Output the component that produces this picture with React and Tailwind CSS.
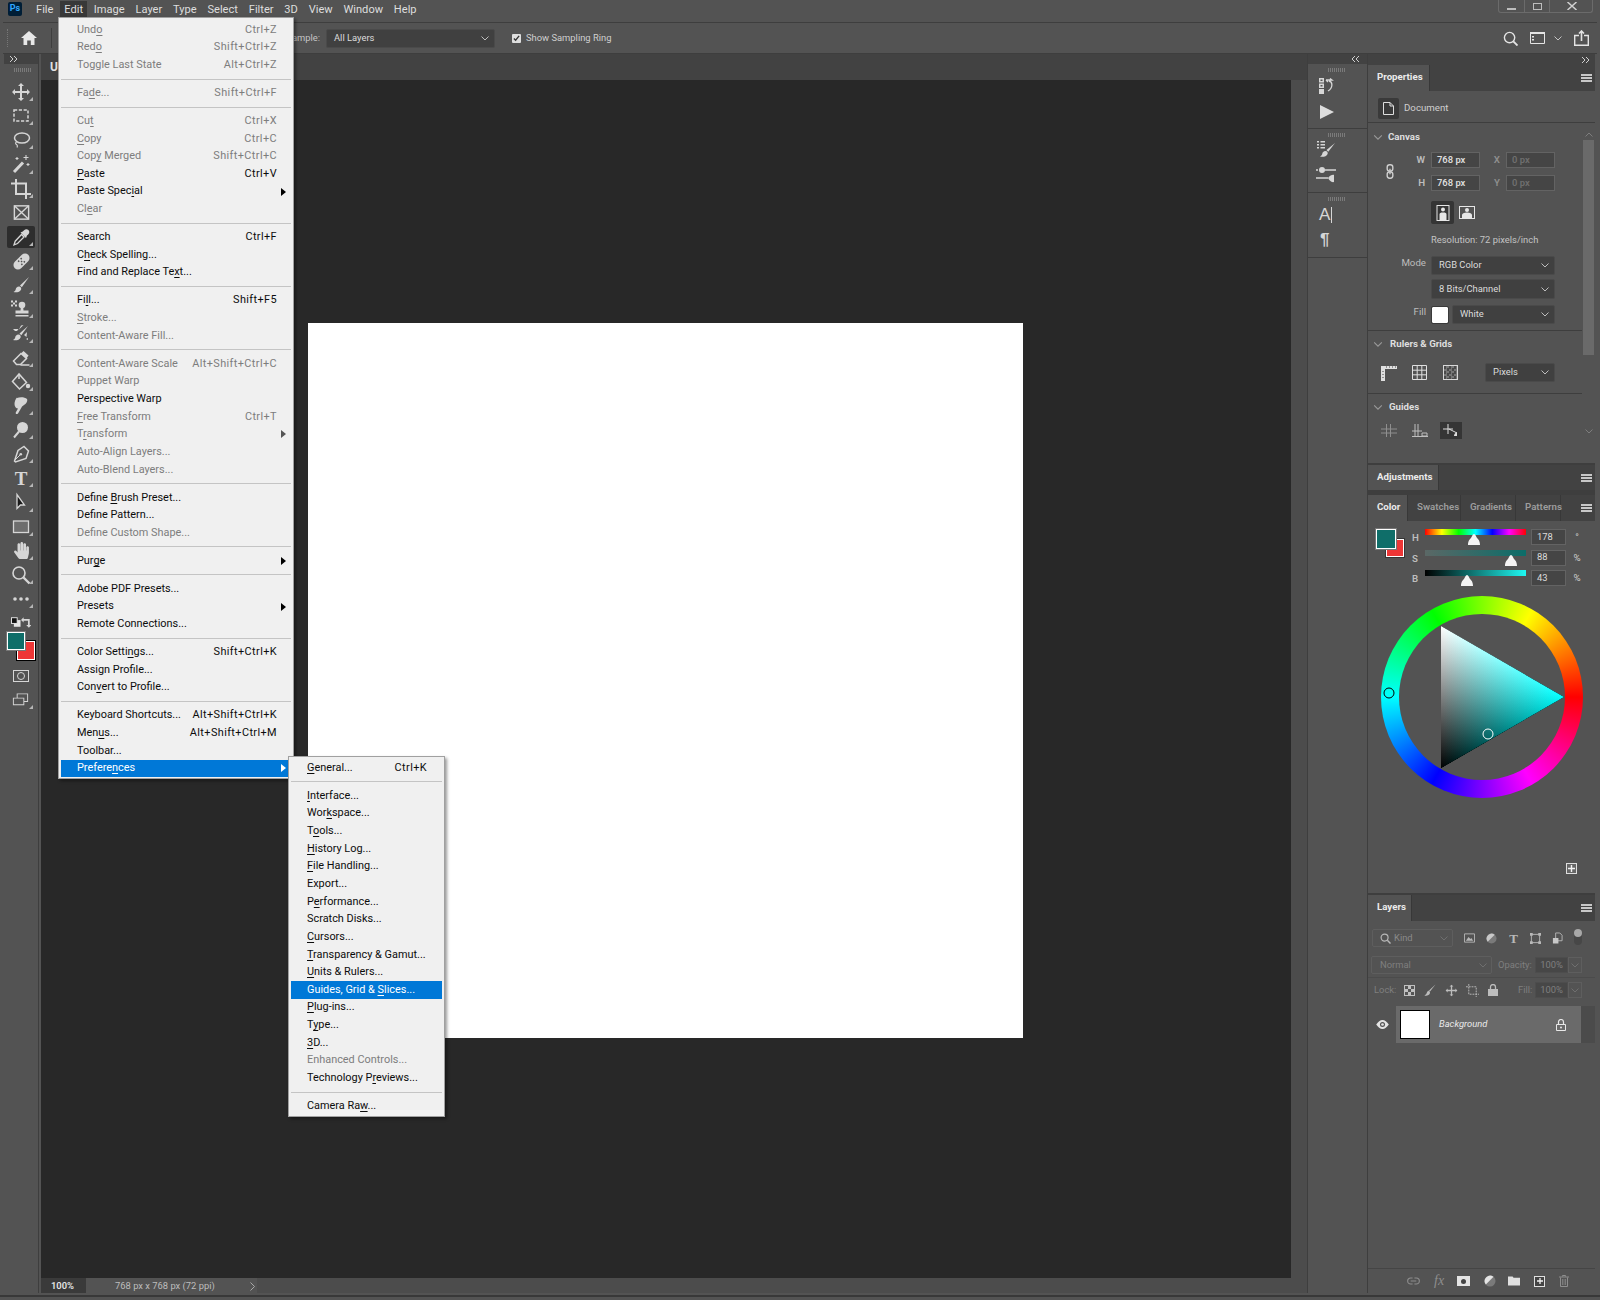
import { FaHandPaper } from 'react-icons/fa';

// &x marks the mnemonic letter, third value means greyed out
const editMenu = [
  ['Und&o', 'Ctrl+Z', 1], ['Red&o', 'Shift+Ctrl+Z', 1], ['Toggle Last State', 'Alt+Ctrl+Z', 1], '-',
  ['Fa&de...', 'Shift+Ctrl+F', 1], '-',
  ['Cu&t', 'Ctrl+X', 1], ['&Copy', 'Ctrl+C', 1], ['Cop&y Merged', 'Shift+Ctrl+C', 1], ['&Paste', 'Ctrl+V'], ['Paste Spec&ial', '>'], ['Cl&ear', '', 1], '-',
  ['Search', 'Ctrl+F'], ['C&heck Spelling...', ''], ['Find and Replace Te&xt...', ''], '-',
  ['Fi&ll...', 'Shift+F5'], ['&Stroke...', '', 1], ['Content-Aware Fill...', '', 1], '-',
  ['Content-Aware Scale', 'Alt+Shift+Ctrl+C', 1], ['Puppet Warp', '', 1], ['Perspective Warp', ''], ['&Free Transform', 'Ctrl+T', 1], ['T&ransform', '>', 1], ['Auto-Align Layers...', '', 1], ['Auto-Blend Layers...', '', 1], '-',
  ['Define &Brush Preset...', ''], ['Define Pattern...', ''], ['Define Custom Shape...', '', 1], '-',
  ['Pur&ge', '>'], '-',
  ['Adobe PDF Presets...', ''], ['Presets', '>'], ['Remote Connections...', ''], '-',
  ['Color Setti&ngs...', 'Shift+Ctrl+K'], ['Assign Profile...', ''], ['Con&vert to Profile...', ''], '-',
  ['Keyboard Shortcuts...', 'Alt+Shift+Ctrl+K'], ['Men&us...', 'Alt+Shift+Ctrl+M'], ['Toolbar...', ''], ['Prefere&nces', '>', 0, 1],
];

const prefsMenu = [
  ['&General...', 'Ctrl+K'], '-',
  ['&Interface...', ''], ['Wor&kspace...', ''], ['T&ools...', ''], ['&History Log...', ''], ['&File Handling...', ''], ['Export...', ''], ['P&erformance...', ''], ['Scratch Disks...', ''], ['&Cursors...', ''], ['&Transparency & Gamut...', ''], ['&Units & Rulers...', ''], ['Guides, Grid & &Slices...', '', 0, 1], ['&Plug-ins...', ''], ['T&ype...', ''], ['&3D...', ''], ['Enhanced Controls...', '', 1], ['Technology P&reviews...', ''], '-',
  ['Camera Ra&w...', ''],
];

function Label({ text }) {
  const i = text.search(/&[^ ]/);
  if (i < 0) return <span>{text}</span>;
  return (
    <span>
      {text.slice(0, i)}
      <span className="underline underline-offset-2">{text[i + 1]}</span>
      {text.slice(i + 2)}
    </span>
  );
}

function MenuList({ items, right }) {
  return items.map((item, i) => {
    if (item === '-') {
      return (
        <div key={i} className="h-[10.3px] flex items-center mx-[2px]">
          <div className="h-px w-full bg-[#c4c4c4]" />
        </div>
      );
    }
    const [label, shortcut, disabled, active] = item;
    return (
      <div
        key={i}
        className={`h-[17.67px] mx-[2px] pl-[16px] flex items-center justify-between whitespace-nowrap ${right} ${active ? 'bg-[#0078d7] text-white' : disabled ? 'text-[#7d7d7d]' : 'text-[#0c0c0c]'}`}
      >
        <Label text={label} />
        {shortcut === '>' ? (
          <svg viewBox="0 0 5 8" className="w-[5px] h-[8px] -mr-[9px]">
            <path d="M0 0l5 4-5 4z" fill={active ? '#fff' : disabled ? '#555' : '#000'} />
          </svg>
        ) : (
          <span className="tracking-[0.4px]">{shortcut}</span>
        )}
      </div>
    );
  });
}

const Svg = ({ s = 20, className = '', children }) => (
  <svg viewBox="0 0 20 20" width={s} height={s} className={className} fill="currentColor">
    {children}
  </svg>
);

const ln = { fill: 'none', stroke: 'currentColor', strokeWidth: 1.5 };

const BrushShape = () => (
  <>
    <path d="M18 2 9 10.5l1.8 1.8z" />
    <path d="M8 11.5c-2 0-3 1.4-3.3 3-.2 1-1.2 2-2.2 2.6 3 .6 6.6 0 7.6-2.6.5-1.400-.4-3-2.100-3z" />
  </>
);

const tools = [
  // move
  <Svg><path d="M10 1l3 3h-2v5h5V7l3 3-3 3v-2h-5v5h2l-3 3-3-3h2v-5H4v2l-3-3 3-3v2h5V4H7z" /></Svg>,
  // marquee
  <Svg><rect x="3" y="4" width="14" height="11" {...ln} strokeDasharray="3.2 1.6" /></Svg>,
  // lasso
  <Svg><ellipse cx="11" cy="8" rx="7.500" ry="5" {...ln} /><path d="M6 11.500c-2 1-1.500 2.500-.5 3 1 .5 1 2 .5 3" {...ln} strokeWidth="1.200" /></Svg>,
  // wand
  <Svg><path d="M3 18 12 8.500" {...ln} strokeWidth="3" /><path d="M15 1v5M12.500 3.500h5M6 3v3M4.500 4.500h3M17 9v3M15.500 10.500h3" {...ln} strokeWidth="1.100" /></Svg>,
  // crop
  <Svg><path d="M5 0v15h15M0 4.500h15V20" {...ln} strokeWidth="2" /></Svg>,
  // frame
  <Svg s={19}><rect x="2.500" y="3" width="15" height="14" {...ln} /><path d="M2.500 3l15 14M17.500 3l-15 14" {...ln} /></Svg>,
  // eyedropper
  <Svg><path d="M10.500 7.500l2.500 2.500-6.500 6.500-3.500 1.300 1.200-3.600z" {...ln} strokeWidth="1.300" /><path d="M9.500 5.500l5.500 5.500 1-2.500 1.200-1c1.600-1.500 1.300-3.500.2-4.500s-3-1.200-4.300.3L11.800 4.500z" /></Svg>,
  // healing
  <Svg><g transform="rotate(-45 10.500 10.500)"><rect x="1" y="6" width="19" height="9" rx="4.500" /><path d="M8 7.500h1.500v1.500H8zm3.500 0H13v1.500h-1.500zM8 12h1.500v1.500H8zm3.500 0H13v1.500h-1.500zM9.800 9.800h1.500v1.500H9.800z" fill="#535353" /></g></Svg>,
  // brush
  <Svg><BrushShape /></Svg>,
  // stamp
  <Svg><circle cx="11" cy="6" r="3.300" /><path d="M9.800 8h2.400l.3 3.500h5v3H4.500v-3h5zM4.500 16h13v1.500h-13z" /><path d="M0 1.500h2v2H0zm4 0h2v2H4zM2 3.500h2v2H2zM0 5.500h2v2H0zm4 0h2v2H4z" /></Svg>,
  // history brush
  <Svg><path d="M17 3 8.500 10.500l1.800 1.800z" /><path d="M7.500 11.500c-2 0-3 1.400-3.300 3-.2 1-1.200 2-2.200 2.600 3 .6 6.600 0 7.600-2.600.5-1.400-.4-3-2.100-3z" /><path d="M2 6h5.500L6 8H4zm8-3.500L12.500 2 8 6.500zM13 12l3-3-.5 5zM15 16l2-1v2z" /></Svg>,
  // eraser
  <Svg><path d="M2.500 13 10 5.500l5.500 5-6 6H5.500z" {...ln} /><path d="M10 5.500l2.500-2.500 5 4.500-2 3z" /><path d="M9.500 17h9" {...ln} /></Svg>,
  // bucket
  <Svg><path d="M8 2 1.500 9.500 8.500 17l7-6.500z" {...ln} /><path d="M8 7V2" {...ln} /><circle cx="17" cy="14" r="2.200" /></Svg>,
  // smudge
  <Svg><path d="M6 2c3-1.500 8-1 10 1 1 2-1 5-3 6-1.500 1-2 1.500-2.500 2.500L7 17.500c-1.500 1.500-3 0-2-1.500l2-3.500c-2 0-3.500-2-3.500-4.500 0-2.500 1-5 2.500-6.500z" /></Svg>,
  // dodge
  <Svg><circle cx="11.500" cy="7.500" r="5.500" /><path d="M3 17.500 8 11.500" {...ln} strokeWidth="2" /></Svg>,
  // pen
  <Svg><path d="M13 2.500l4.500 4.500-2.500 7.500-10.500 3.500-1-1 3.500-10.500z" {...ln} /><path d="M3.500 16.500 9 11" {...ln} strokeWidth="1" /><circle cx="9.800" cy="10.200" r="1.300" /></Svg>,
  // type
  <span className="text-[19px] leading-none font-bold font-['Liberation_Serif',serif]">T</span>,
  // path select
  <Svg><path d="M6 2.500v14l3.500-3.500 4 0z" fill="#1a1a1a" stroke="currentColor" strokeWidth="1.300" /></Svg>,
  // rectangle
  <Svg><rect x="2.500" y="4" width="15" height="11.500" fill="#6e6e6e" stroke="currentColor" strokeWidth="1.300" /></Svg>,
  // hand
  <FaHandPaper size={17} />,
  // zoom
  <Svg><circle cx="8" cy="8" r="6" {...ln} strokeWidth="1.600" /><path d="M12.500 12.500 18.500 18.500" {...ln} strokeWidth="2.400" /></Svg>,
  // more
  <Svg><circle cx="4" cy="10" r="1.800" /><circle cx="10" cy="10" r="1.800" /><circle cx="16" cy="10" r="1.800" /></Svg>,
];

function Corner() {
  return (
    <svg viewBox="0 0 4 4" className="absolute right-[5px] bottom-[3px] w-[4px] h-[4px]">
      <path d="M4 0v4H0z" fill="#b5b5b5" />
    </svg>
  );
}

function Grip({ className = '' }) {
  return <div className={`h-[4px] w-[18px] mx-auto bg-[repeating-linear-gradient(90deg,#7a7a7a_0,#7a7a7a_1px,transparent_1px,transparent_2px)] ${className}`} />;
}

function Toolbar() {
  return (
    <div className="w-[35px] ml-[4px] border-r border-[#3e3e3e] shrink-0 flex flex-col text-[#d6d6d6]">
      <div className="h-[10px] bg-[#424242] flex items-center pl-[6px]">
        <Arrows dir="right" />
      </div>
      <div className="pt-[4px] pb-[3px] pl-[4px]"><Grip /></div>
      <div className="mt-[5px]">
        {tools.map((icon, i) => (
          <div key={i} className="relative h-[24.15px] flex items-center justify-center">
            {i === 6 && <div className="absolute left-[3px] top-[1px] w-[28px] h-[22px] rounded-[2px] bg-[#2d2d2d]" />}
            <div className="relative w-[20px] h-[20px] flex items-center justify-center">{icon}</div>
            {i !== 5 && <Corner />}
          </div>
        ))}
      </div>
      <div className="flex justify-between px-[7px] mt-[5px] h-[12px] items-center">
        <svg viewBox="0 0 10 10" className="w-[10px] h-[10px]">
          <rect x="3" y="3" width="7" height="7" fill="#e6e6e6" />
          <rect x="0.500" y="0.500" width="6" height="6" fill="#111" stroke="#e6e6e6" />
        </svg>
        <svg viewBox="0 0 12 12" className="w-[11px] h-[11px]">
          <path d="M0 3l3-3v2h7v7h2l-3 3-3-3h2V4H3v2z" fill="#d6d6d6" />
        </svg>
      </div>
      <div className="relative h-[28px] mt-[6px]">
        <div className="absolute left-[13px] top-[7px] w-[18px] h-[19px] bg-[#ee3636] border-[1.500px] border-white outline outline-black" />
        <div className="absolute left-[3px] top-[-2px] w-[18px] h-[18px] bg-[#0f6e69] border-[1.500px] border-white outline outline-[#777]" />
      </div>
      <div className="flex justify-center mt-[8px] -ml-[1px]">
        <div className="w-[16px] h-[12px] border border-[#d6d6d6] flex items-center justify-center">
          <div className="w-[8px] h-[8px] rounded-full border border-[#d6d6d6]" />
        </div>
      </div>
      <div className="relative h-[24px] mt-[6px] flex items-center justify-center -ml-[1px]">
        <Svg s={19}><path d="M6 2.500h12v9H14v3.500H2V7h4z M7 3.500V7h7v3.500h3v-7zM3 8v6h10V8z" fillRule="evenodd" /></Svg>
        <Corner />
      </div>
    </div>
  );
}

function Arrows({ dir }) {
  const d = dir === 'right' ? 'M0 0l3 3-3 3M4 0l3 3-3 3' : 'M3 0 0 3l3 3M7 0 4 3l3 3';
  return (
    <svg viewBox="0 0 7 6" className="w-[7px] h-[6px]">
      <path d={d} fill="none" stroke="#cfcfcf" strokeWidth="1" />
    </svg>
  );
}

function Chevron({ className = '', color = '#bdbdbd' }) {
  return (
    <svg viewBox="0 0 8 5" className={`w-[8px] h-[5px] shrink-0 ${className}`}>
      <path d="M0.500 0.500 4 4l3.500-3.500" fill="none" stroke={color} strokeWidth="1" />
    </svg>
  );
}

function Hamburger() {
  return (
    <div className="ml-auto mr-[3px] w-[11px] flex flex-col gap-[1px]">
      <div className="h-[2px] bg-[#c8c8c8]" />
      <div className="h-[2px] bg-[#c8c8c8]" />
      <div className="h-[2px] bg-[#c8c8c8]" />
    </div>
  );
}

function Tabs({ tabs, h = 'h-[26px]', pb = 'pb-[2px]' }) {
  return (
    <div className={`${h} bg-[#424242] flex items-center shrink-0 text-[9.7px] font-bold`}>
      {tabs.map(([name, width], i) => (
        <div
          key={name}
          className={`${width} h-full flex items-center pl-[9px] ${pb} border-r border-[#383838] ${i === 0 ? 'bg-[#535353] text-[#ebebeb]' : 'text-[#9d9d9d] font-semibold'}`}
        >
          {name}
        </div>
      ))}
      <Hamburger />
    </div>
  );
}

function Field({ w, value, dim, h = 'h-[16px]' }) {
  return (
    <div className={`${w} ${h} border border-[#636363] bg-[#454545] pl-[5px] flex items-center text-[9.4px] ${dim ? 'border-[#5c5c5c] bg-[#4c4c4c] text-[#6f6f6f]' : 'text-[#dcdcdc]'}`}>
      {value}
    </div>
  );
}

function Select({ w, h, value, pl = 'pl-[7px]' }) {
  return (
    <div className={`${w} ${h} ${pl} pr-[5px] rounded-[2px] bg-[#404040] border border-[#4a4a4a] flex items-center justify-between text-[9.4px] text-[#dcdcdc]`}>
      <span>{value}</span>
      <Chevron />
    </div>
  );
}

function SectionHead({ title, h, gap }) {
  return (
    <div className={`${h} pl-[6px] pt-[1px] flex items-center ${gap} text-[9.7px] font-bold text-[#dedede]`}>
      <Chevron className="scale-110" color="#9a9a9a" />
      {title}
    </div>
  );
}

function PropertiesPanel() {
  return (
    <div className="h-[398px] flex flex-col shrink-0">
      <Tabs tabs={[['Properties', 'w-[62px]']]} />
      <div className="h-[32px] pl-[10px] pt-[3px] flex items-center gap-[5px] border-b border-[#3e3e3e] shrink-0 text-[9.7px] text-[#cfcfcf]">
        <div className="w-[21px] h-[21px] rounded-[2px] bg-[#3a3a3a] flex items-center justify-center">
          <svg viewBox="0 0 11 13" className="w-[11px] h-[13px]">
            <path d="M0.500 0.500h6.500l3.500 3.500v8.500H0.500zM7 0.500V4h3.500" fill="none" stroke="#dedede" />
          </svg>
        </div>
        Document
      </div>
      <div className="flex flex-1 min-h-0">
        <div className="w-[214px] overflow-hidden">
          <div className="h-[208px] border-b border-[#3e3e3e]">
            <SectionHead title="Canvas" h="h-[27px]" gap="gap-[6px]" />
            <div className="flex mt-[2px] text-[9.7px] font-semibold text-[#bdbdbd]">
              <div className="w-[63px] relative">
                <div className="flex justify-end pr-[6px] h-[16px] items-center">W</div>
                <div className="flex justify-end pr-[6px] h-[16px] mt-[7px] items-center">H</div>
                <svg viewBox="0 0 8 16" className="absolute left-[18px] top-[12px] w-[8px] h-[15px]">
                  <rect x="1" y="0.800" width="6" height="6.800" rx="2.600" fill="none" stroke="#cfcfcf" strokeWidth="1.500" />
                  <rect x="1" y="8.400" width="6" height="6.800" rx="2.600" fill="none" stroke="#cfcfcf" strokeWidth="1.500" />
                  <path d="M4 5v6" fill="none" stroke="#cfcfcf" strokeWidth="1.500" />
                </svg>
              </div>
              <div className="flex flex-col gap-[7px]">
                <Field w="w-[49px]" value="768 px" />
                <Field w="w-[49px]" value="768 px" />
              </div>
              <div className="w-[26px] text-[#8e8e8e]">
                <div className="flex justify-end pr-[6px] h-[16px] items-center">X</div>
                <div className="flex justify-end pr-[6px] h-[16px] mt-[7px] items-center">Y</div>
              </div>
              <div className="flex flex-col gap-[7px]">
                <Field w="w-[49px]" value="0 px" dim />
                <Field w="w-[49px]" value="0 px" dim />
              </div>
            </div>
            <div className="ml-[63px] mt-[10px] h-[23px] flex items-center gap-[5px]">
              <div className="w-[23px] h-[23px] rounded-[2px] bg-[#353535] flex items-center justify-center">
                <svg viewBox="0 0 13 16" className="w-[14px] h-[16px]">
                  <rect x="0.500" y="0.500" width="12" height="15" fill="none" stroke="#e6e6e6" />
                  <circle cx="6.500" cy="4.500" r="2" fill="#e6e6e6" />
                  <path d="M3 15V9.500c0-1.500 1-2 3.500-2s3.500.5 3.500 2V15z" fill="#e6e6e6" />
                </svg>
              </div>
              <svg viewBox="0 0 16 13" className="w-[16px] h-[13px]">
                <rect x="0.500" y="0.500" width="15" height="12" fill="none" stroke="#e6e6e6" />
                <circle cx="8" cy="4" r="2" fill="#e6e6e6" />
                <path d="M3 12V9c0-1.500 2-2.500 5-2.500s5 1 5 2.500v3z" fill="#e6e6e6" />
              </svg>
            </div>
            <div className="ml-[63px] mt-[9px] h-[14px] flex items-center text-[9.4px] text-[#c4c4c4]">Resolution: 72 pixels/inch</div>
            <div className="flex items-center mt-[9px]">
              <div className="w-[58px] text-right text-[9.7px] text-[#bdbdbd] -mt-[4px]">Mode</div>
              <div className="ml-[5px]"><Select w="w-[124px]" h="h-[19px]" value="RGB Color" /></div>
            </div>
            <div className="ml-[63px] mt-[4px]"><Select w="w-[124px]" h="h-[20px]" value="8 Bits/Channel" /></div>
            <div className="flex items-center mt-[6px]">
              <div className="w-[58px] text-right text-[9.7px] text-[#bdbdbd] -mt-[4px]">Fill</div>
              <div className="ml-[6px] w-[16px] h-[16px] bg-white rounded-[1px] outline outline-[#3a3a3a]" />
              <div className="ml-[4px]"><Select w="w-[103px]" h="h-[19px]" value="White" /></div>
            </div>
          </div>
          <div className="h-[63px] border-b border-[#3e3e3e]">
            <SectionHead title="Rulers & Grids" h="h-[25px]" gap="gap-[8px]" />
            <div className="flex items-center mt-[7px] h-[19px] text-[#d8d8d8]">
              <div className="ml-[13px] w-[16px]">
                <svg viewBox="0 0 16 16" className="w-[16px] h-[16px]">
                  <path d="M0 1h16v3H4v12H0z" fill="#e0e0e0" />
                  <path d="M5 2h1M8 2h1M11 2h1M14 2h1M2 6v1M2 9v1M2 12v1" stroke="#444" />
                </svg>
              </div>
              <div className="ml-[15px] w-[15px]">
                <svg viewBox="0 0 15 15" className="w-[15px] h-[15px]">
                  <path d="M.5.500h14v14H.5zM5.200.500v14M9.800.500v14M.5 5.200h14M.5 9.800h14" fill="none" stroke="#e0e0e0" />
                </svg>
              </div>
              <div className="ml-[16px] w-[15px] h-[15px] border border-[#d8d8d8] bg-[repeating-conic-gradient(#777_0_25%,#4a4a4a_0_50%)] bg-size-[5px_5px]" />
              <div className="ml-[27px]"><Select w="w-[70px]" h="h-[19px]" value="Pixels" /></div>
            </div>
          </div>
          <SectionHead title="Guides" h="h-[26px]" gap="gap-[7px]" />
          <div className="flex items-center mt-[2px] h-[17px]">
            <svg viewBox="0 0 16 13" className="ml-[13px] w-[16px] h-[13px]">
              <path d="M0 5h16M0 9h16M5.500 0v13M9.500 0v13" fill="none" stroke="#8f8f8f" />
            </svg>
            <svg viewBox="0 0 16 13" className="ml-[15px] w-[16px] h-[13px]">
              <path d="M0 12.500h16M0 7h10M3 0v13M6 0v13" fill="none" stroke="#bfbfbf" />
              <path d="M10 9h5v3h-5z" fill="none" stroke="#bfbfbf" />
            </svg>
            <div className="ml-[12px] w-[22px] h-[17px] bg-[#353535] flex items-center justify-center">
              <svg viewBox="0 0 16 13" className="w-[16px] h-[13px]">
                <path d="M0 5h10M5 0v10M6 5l8 4" fill="none" stroke="#dedede" />
                <path d="M11 12c0-2 1-3 3-4v4z" fill="#dedede" />
              </svg>
            </div>
          </div>
        </div>
        <div className="w-[13px] h-[318px] relative">
          <Chevron className="rotate-180 absolute left-[3px] top-[9px]" color="#7d7d7d" />
          <div className="absolute left-[1px] top-[17px] w-[11px] h-[215px] bg-[#6a6a6a]" />
          <Chevron className="absolute left-[3px] bottom-[7px]" color="#7d7d7d" />
        </div>
      </div>
    </div>
  );
}

function Slider({ bg, at }) {
  return (
    <div className="relative w-[101px] h-[6px] mt-[1px]">
      <div className={`w-full h-full ${bg}`} />
      <svg viewBox="0 0 12 11" className="absolute top-[5px] w-[12px] h-[11px] -ml-[6px]" style={{ left: at }}>
        <path d="M6 0c1.500 0 2 2.500 3 4 1.500 1.500 3 3 3 7H0c0-4 1.500-5.500 3-7 1-1.500 1.500-4 3-4z" fill="#f4f4f4" />
      </svg>
    </div>
  );
}

function ColorRow({ label, bg, at, value, unit }) {
  return (
    <div className="flex h-[20.500px] text-[9.7px]">
      <div className="w-[13px] pt-[3px] text-[#bdbdbd] font-semibold">{label}</div>
      <Slider bg={bg} at={at} />
      <div className="ml-[5px] mt-[1px]"><Field w="w-[35px]" value={value} /></div>
      <div className="ml-[5px] w-[12px] pt-[2px] text-center text-[#cfcfcf]">{unit}</div>
    </div>
  );
}

function ColorPanel() {
  return (
    <div className="h-[398px] flex flex-col shrink-0">
      <Tabs tabs={[['Color', 'w-[40px]'], ['Swatches', 'w-[53px]'], ['Gradients', 'w-[55px]'], ['Patterns', 'w-[45px]']]} />
      <div className="flex pt-[7px] h-[69px]">
        <div className="relative w-[44px] shrink-0">
          <div className="absolute left-[18px] top-[11px] w-[18px] h-[18px] bg-[#ee3636] border border-white outline outline-[#353535]" />
          <div className="absolute left-[8px] top-[1px] w-[20px] h-[20px] bg-[#0f6e69] border-[1.500px] border-white outline outline-[#777]" />
        </div>
        <div>
          <ColorRow label="H" at="49px" value="178" unit="°" bg="bg-[linear-gradient(to_right,#ff0000,#ffff00,#00ff00,#00ffff,#0000ff,#ff00ff,#ff0000)]" />
          <ColorRow label="S" at="86px" value="88" unit="%" bg="bg-[linear-gradient(to_right,#5b6866,#0b6d69)]" />
          <ColorRow label="B" at="42px" value="43" unit="%" bg="bg-[linear-gradient(to_right,#000000,#1ff8f2)]" />
        </div>
      </div>
      <div className="relative ml-[13px] mt-[6px] w-[202px] h-[202px] rounded-full bg-[conic-gradient(#80ff00,#ffff00_30deg,#ff0000_90deg,#ff00ff_150deg,#0000ff_210deg,#00ffff_270deg,#00ff00_330deg,#80ff00)]">
        <div className="absolute inset-[18px] rounded-full bg-[#535353]" />
        <svg viewBox="0 0 202 202" className="absolute inset-0 isolate">
          <defs>
            <linearGradient id="triW" gradientUnits="userSpaceOnUse" x1="60" y1="30" x2="121.500" y2="136.500">
              <stop offset="0" stopColor="#fff" />
              <stop offset="1" stopColor="#000" />
            </linearGradient>
            <linearGradient id="triC" gradientUnits="userSpaceOnUse" x1="183" y1="101" x2="60" y2="101">
              <stop offset="0" stopColor="#0ff" />
              <stop offset="1" stopColor="#000" />
            </linearGradient>
          </defs>
          <polygon points="60,30 183,101 60,172" fill="url(#triW)" />
          <polygon points="60,30 183,101 60,172" fill="url(#triC)" className="mix-blend-plus-lighter" />
          <circle cx="8" cy="97" r="5" fill="none" stroke="#000" />
          <circle cx="107" cy="138" r="5" fill="none" stroke="#fff" />
        </svg>
      </div>
      <div className="self-end mr-[18px] mt-[65px] w-[11px] h-[11px] border border-[#dedede] bg-[#666] flex items-center justify-center">
        <svg viewBox="0 0 7 7" className="w-[7px] h-[7px]"><path d="M3.500 0v7M0 3.500h7" stroke="#f2f2f2" strokeWidth="1.400" /></svg>
      </div>
    </div>
  );
}

function LayersPanel() {
  return (
    <div className="flex-1 flex flex-col text-[9.4px] text-[#bdbdbd]">
      <Tabs tabs={[['Layers', 'w-[44px]']]} />
      <div className="flex items-center mt-[8px] pl-[4px] h-[18px]">
        <div className="w-[81px] h-full rounded-[2px] border border-[#5e5e5e] pl-[7px] pr-[4px] flex items-center gap-[3px] text-[#8a8a8a]">
          <svg viewBox="0 0 12 12" className="w-[11px] h-[11px]">
            <circle cx="5" cy="5" r="3.800" fill="none" stroke="#b8b8b8" strokeWidth="1.300" />
            <path d="M8 8l3.500 3.500" stroke="#b8b8b8" strokeWidth="1.600" />
          </svg>
          Kind
          <Chevron className="ml-auto" color="#6f6f6f" />
        </div>
        <div className="ml-[11px] flex items-center gap-[11px] text-[#b8b8b8]">
          <svg viewBox="0 0 12 10" className="w-[11px] h-[10px]">
            <path d="M.5.500h11v9H.5z" fill="none" stroke="currentColor" />
            <path d="M2 8l3-4 2 2 1-1 2 3z" fill="currentColor" />
          </svg>
          <svg viewBox="0 0 12 12" className="w-[11px] h-[11px]">
            <circle cx="6" cy="6" r="5.500" fill="#7a7a7a" />
            <path d="M1.800 9.500A5.500 5.500 0 0 1 9.500 1.800z" fill="#c8c8c8" />
          </svg>
          <span className="w-[11px] text-[13px] leading-none font-bold text-center font-['Liberation_Serif',serif]">T</span>
          <svg viewBox="0 0 12 12" className="w-[11px] h-[11px]">
            <path d="M1.500 1.500h9v9h-9z" fill="none" stroke="currentColor" />
            <path d="M0 0h3v3H0zm9 0h3v3H9zM0 9h3v3H0zm9 0h3v3H9z" fill="currentColor" />
          </svg>
          <svg viewBox="0 0 12 12" className="w-[11px] h-[12px]">
            <path d="M4 .5h4.500l2.500 2.500v6H4z" fill="none" stroke="currentColor" />
            <rect x="1" y="6" width="6" height="6" fill="#c8c8c8" />
          </svg>
          <div className="relative w-[8px] h-[16px] -mt-[3px] rounded-full bg-[#474747]">
            <div className="w-[8px] h-[8px] rounded-full bg-[#a8a8a8]" />
          </div>
        </div>
      </div>
      <div className="flex items-center mt-[9px] pl-[3px] h-[18px] text-[#7f7f7f]">
        <div className="w-[121px] h-full rounded-[2px] border border-[#5e5e5e] pl-[8px] pr-[4px] flex items-center justify-between">
          Normal
          <Chevron color="#6f6f6f" />
        </div>
        <span className="ml-[6px]">Opacity:</span>
        <div className="ml-auto w-[33px] h-[16px] bg-[#474747] border border-[#4d4d4d] flex items-center justify-center">100%</div>
        <div className="w-[14px] h-[16px] mr-[13px] border border-[#5e5e5e] flex items-center justify-center"><Chevron color="#6f6f6f" /></div>
      </div>
      <div className="mt-[3px] border-t border-[#4b4b4b]" />
      <div className="flex items-center mt-[4px] pl-[6px] h-[16px] text-[#7f7f7f]">
        <span className="w-[30px]">Lock:</span>
        <div className="w-[11px] h-[11px] border border-[#c0c0c0] bg-[repeating-conic-gradient(#c0c0c0_0_25%,#555_0_50%)] bg-size-[6px_6px]" />
        <svg viewBox="0 0 12 12" className="ml-[9px] w-[12px] h-[12px] text-[#bdbdbd]">
          <path d="M11.500.5 5 6.500l1 1z" fill="currentColor" />
          <path d="M4.500 7C3 7 3 8.500 2.500 9.500 2 10.500 1 11 .5 11.500c2 .5 5 0 5.500-2.500.1-1-.5-2.500-1.500-2.500z" fill="currentColor" />
        </svg>
        <svg viewBox="0 0 20 20" className="ml-[9px] w-[13px] h-[13px] text-[#bdbdbd]">
          <path fill="currentColor" d="M10 1l3 3h-2v5h5V7l3 3-3 3v-2h-5v5h2l-3 3-3-3h2v-5H4v2l-3-3 3-3v2h5V4H7z" />
        </svg>
        <svg viewBox="0 0 14 14" className="ml-[8px] w-[13px] h-[13px] text-[#bdbdbd]">
          <path d="M3 0v11h11M0 3h11v11" fill="none" stroke="currentColor" strokeDasharray="2 1" />
        </svg>
        <svg viewBox="0 0 10 12" className="ml-[9px] w-[10px] h-[12px] text-[#bdbdbd]">
          <path d="M0 5h10v7H0z" fill="currentColor" />
          <path d="M2.500 5V3a2.500 2.500 0 0 1 5 0v2" fill="none" stroke="currentColor" strokeWidth="1.300" />
        </svg>
        <span className="ml-[20px]">Fill:</span>
        <div className="ml-auto w-[33px] h-[16px] bg-[#474747] border border-[#4d4d4d] flex items-center justify-center">100%</div>
        <div className="w-[14px] h-[16px] mr-[13px] border border-[#5e5e5e] flex items-center justify-center"><Chevron color="#6f6f6f" /></div>
      </div>
      <div className="flex mt-[8px] h-[37px]">
        <div className="w-[28px] flex items-center justify-center">
          <svg viewBox="0 0 14 10" className="w-[13px] h-[9px]">
            <path d="M0 5c2-3 4.500-5 7-5s5 2 7 5c-2 3-4.500 5-7 5S2 8 0 5z" fill="#e4e4e4" />
            <circle cx="7" cy="5" r="2.800" fill="#535353" />
            <circle cx="7" cy="5" r="1.500" fill="#e4e4e4" />
          </svg>
        </div>
        <div className="w-[185px] bg-[#6a6a6a] flex items-center pl-[4px] text-[#eaeaea]">
          <div className="w-[30px] h-[29px] bg-white border border-black shrink-0" />
          <span className="ml-[9px] italic">Background</span>
          <svg viewBox="0 0 10 12" className="ml-auto mr-[15px] w-[10px] h-[12px]">
            <path d="M.5 5.500h9v6h-9z" fill="none" stroke="#e8e8e8" />
            <path d="M2.500 5V3a2.500 2.500 0 0 1 5 0v2" fill="none" stroke="#e8e8e8" strokeWidth="1.200" />
            <circle cx="5" cy="8.500" r="1" fill="#e8e8e8" />
          </svg>
        </div>
        <div className="flex-1 bg-[#4b4b4b]" />
      </div>
      <div className="flex-1" />
      <div className="h-[25px] border-t border-[#454545] flex items-center pl-[39px]">
        <svg viewBox="0 0 14 8" className="w-[13px] h-[8px]">
          <path d="M6 .7H4a3.300 3.300 0 0 0 0 6.600h2M8 .7h2a3.300 3.300 0 0 1 0 6.600H8M4 4h6" fill="none" stroke="#8e8e8e" strokeWidth="1.200" />
        </svg>
        <span className="ml-[14px] w-[12px] text-[14px] leading-none italic text-[#8e8e8e] font-['Liberation_Serif',serif]">fx</span>
        <div className="ml-[11px] w-[13px] h-[10px] bg-[#e4e4e4] flex items-center justify-center">
          <div className="w-[5px] h-[5px] rounded-full bg-[#444]" />
        </div>
        <svg viewBox="0 0 12 12" className="ml-[14px] w-[12px] h-[12px]">
          <circle cx="6" cy="6" r="5.500" fill="#7a7a7a" />
          <path d="M1.800 9.500A5.500 5.500 0 0 1 9.500 1.800z" fill="#e4e4e4" />
        </svg>
        <svg viewBox="0 0 13 10" className="ml-[12px] w-[12px] h-[10px]">
          <path d="M0 0h5l1 1.500h7V10H0z" fill="#e0e0e0" />
        </svg>
        <div className="ml-[14px] w-[11px] h-[11px] border border-[#e0e0e0] bg-[#444] flex items-center justify-center">
          <svg viewBox="0 0 7 7" className="w-[6px] h-[6px]"><path d="M3.500 0v7M0 3.500h7" stroke="#f2f2f2" strokeWidth="1.500" /></svg>
        </div>
        <svg viewBox="0 0 10 12" className="ml-[14px] w-[10px] h-[12px]">
          <path d="M0 2h10M3.500 1.500V.5h3v1M1.500 2.500v9h7v-9M3.800 4v6M6.200 4v6" fill="none" stroke="#8e8e8e" />
        </svg>
      </div>
    </div>
  );
}

function IconDock() {
  const group = 'h-[64.500px] border-b border-[#3e3e3e] pt-[4px] flex flex-col items-start text-[#d6d6d6]';
  return (
    <div className="w-[61px] shrink-0 border-x border-[#3e3e3e] flex flex-col">
      <div className="h-[10px] bg-[#424242] flex justify-end items-center pr-[8px]">
        <Arrows dir="left" />
      </div>
      <div className={group}>
        <Grip className="ml-[20px]" />
        <svg viewBox="0 0 15 16" className="mt-[6px] ml-[11px] w-[15px] h-[16px]">
          <path d="M0 0h5v4.500H0zM0 5.500h5V10H0zM0 11h5v5H0z" fill="#d6d6d6" />
          <path d="M1.500 1.500h2v1.500h-2zM1.500 7h2v1.500h-2z" fill="#535353" />
          <path d="M7 2h6l-2-1.500M7 2l2 2M10 3c4 1 4 7-1 10" fill="none" stroke="#d6d6d6" strokeWidth="1.300" />
        </svg>
        <svg viewBox="0 0 13 13" className="mt-[11px] ml-[12px] w-[14px] h-[14px]"><path d="M0 0l13 6.500L0 13z" fill="#dcdcdc" /></svg>
      </div>
      <div className={group}>
        <Grip className="ml-[20px]" />
        <svg viewBox="0 0 20 20" className="mt-[3px] ml-[8px] w-[20px] h-[20px]" fill="currentColor">
          <path d="M1 1h2v1.500H1zm0 3h2v1.500H1zm0 3h2v1.500H1zM4.500 1H9v1.500H4.500zm0 3H9v1.500H4.500zm0 3H9v1.500H4.500z" />
          <path d="M19 3 10.500 10l1.800 1.800z" />
          <path d="M9.500 11c-2 0-3 1.400-3.300 3-.2 1-1.200 2-2.200 2.600 3 .6 6.600 0 7.600-2.600.5-1.400-.4-3-2.100-3z" />
        </svg>
        <svg viewBox="0 0 20 16" className="mt-[7px] ml-[8px] w-[20px] h-[16px]" fill="currentColor">
          <circle cx="6" cy="3" r="3" />
          <path d="M2 3H0M9 3h11M0 11h12" stroke="currentColor" strokeWidth="1.500" />
          <path d="M12 11c2-3 5-3.500 6-3v7c-1 .5-4 0-6-4z" />
        </svg>
      </div>
      <div className={group}>
        <Grip className="ml-[20px]" />
        <span className="mt-[4px] ml-[11px] h-[19px] flex items-center text-[17px] leading-none font-['Liberation_Sans',sans-serif]">A<span className="inline-block h-[16px] w-px ml-px bg-[#d6d6d6]" /></span>
        <span className="mt-[7px] ml-[12px] text-[17px] leading-none font-bold font-['Liberation_Sans',sans-serif]">¶</span>
      </div>
    </div>
  );
}

export default function App() {
  const menus = ['File', 'Edit', 'Image', 'Layer', 'Type', 'Select', 'Filter', '3D', 'View', 'Window', 'Help'];
  return (
    <div className="relative w-[1600px] h-[1300px] overflow-hidden bg-[#535353] flex flex-col font-['Roboto',sans-serif] select-none">
      {/* menu bar */}
      <div className="h-[22px] shrink-0 flex items-center text-[11.100px] text-[#dedede]">
        <div className="ml-[8px] w-[14px] h-[14px] -mt-[4px] rounded-[2px] bg-[#001e36] flex items-center justify-center text-[9px] font-bold text-[#31a8ff]">Ps</div>
        <div className="ml-[14px] flex gap-[10.800px] -mt-[2px]">
          {menus.map((m) => (
            <span key={m} className={m === 'Edit' ? 'relative before:absolute before:-inset-x-[4px] before:-inset-y-[1px] before:bg-[#383838]' : ''}>
              <span className="relative">{m}</span>
            </span>
          ))}
        </div>
        <div className="ml-auto mr-[7px] -mt-[9px] w-[95px] h-[13px] rounded-b-[3px] border border-t-0 border-[#6b6b6b] flex items-center text-[#d4d4d4]">
          <div className="w-[26px] h-full flex items-end pb-[2px] justify-center border-r border-[#6b6b6b]"><div className="w-[9px] h-[2px] bg-[#bdbdbd]" /></div>
          <div className="w-[25px] h-full flex items-center justify-center border-r border-[#6b6b6b]"><div className="w-[9px] h-[7px] border-[1.500px] border-[#bdbdbd]" /></div>
          <svg viewBox="0 0 10 8" className="ml-[17px] w-[10px] h-[8px]"><path d="M.5 0l9 8M9.500 0l-9 8" stroke="#d0d0d0" strokeWidth="1.500" /></svg>
        </div>
      </div>

      {/* options bar */}
      <div className="h-[32px] shrink-0 mx-[3px] border-y border-[#3e3e3e] flex items-center text-[9.400px] text-[#cfcfcf]">
        <div className="ml-[4px] w-px h-[18px] border-l border-dotted border-[#777]" />
        <svg viewBox="0 0 16 14" className="ml-[13px] w-[16px] h-[14px]"><path d="M8 0 0 7h2.500v7h3.700V9.500h3.600V14h3.700V7H16z" fill="#e8e8e8" /></svg>
        <div className="ml-[14px] w-px h-[20px] bg-[#3e3e3e]" />
        <span className="ml-[214px] w-[54px] text-right whitespace-nowrap text-[#c4c4c4]">Sample:</span>
        <div className="ml-[6px]"><Select w="w-[169px]" h="h-[19px]" value="All Layers" /></div>
        <div className="ml-[17px] w-[9px] h-[9px] rounded-[1px] bg-[#dedede] flex items-center justify-center">
          <svg viewBox="0 0 8 8" className="w-[7px] h-[7px]"><path d="M1 4l2 2 4-5" fill="none" stroke="#333" strokeWidth="1.500" /></svg>
        </div>
        <span className="ml-[5px]">Show Sampling Ring</span>
        <div className="ml-auto mr-[8px] flex items-center text-[#e4e4e4]">
          <svg viewBox="0 0 16 16" className="w-[15px] h-[15px]">
            <circle cx="7" cy="7" r="5.500" fill="none" stroke="#e4e4e4" strokeWidth="1.500" />
            <path d="M11 11l4.500 4.500" stroke="#e4e4e4" strokeWidth="2" />
          </svg>
          <svg viewBox="0 0 15 12" className="ml-[12px] w-[15px] h-[12px]">
            <path d="M.5.500h14v11H.5z" fill="none" stroke="#e4e4e4" />
            <path d="M0 0h15v2H0zM2 4h2v1.500H2zM2 7h2v1.500H2z" fill="#e4e4e4" />
          </svg>
          <Chevron className="ml-[9px]" color="#c4c4c4" />
          <svg viewBox="0 0 15 16" className="ml-[12px] w-[15px] h-[16px]">
            <path d="M5 5.500H.7v9.800h13.600V5.500H10" fill="none" stroke="#e4e4e4" strokeWidth="1.400" />
            <path d="M7.500 11V1.500M5 3.500 7.500 1 10 3.500" fill="none" stroke="#e4e4e4" strokeWidth="1.600" />
          </svg>
        </div>
      </div>

      {/* work area */}
      <div className="flex-1 min-h-0 flex">
        <Toolbar />
        <div className="flex-1 min-w-0 ml-[2px] flex flex-col">
          <div className="h-[26px] shrink-0 bg-[#424242] pl-[9px] flex items-center text-[12px] font-bold text-[#e0e0e0]">U</div>
          <div className="flex-1 min-h-0 flex">
            <div className="w-[1250px] pr-[2px] bg-[#282828] flex items-center justify-center">
              <div className="w-[715px] h-[715px] mt-[3px] bg-white" />
            </div>
            <div className="flex-1 bg-[#4c4c4c]" />
          </div>
          <div className="h-[15px] shrink-0 flex items-center text-[9.400px]">
            <div className="w-[45px] h-full bg-[#3a3a3a] pl-[10px] pt-[1px] flex items-center font-semibold text-[#e4e4e4]">100%</div>
            <div className="w-[171px] h-full bg-[#535353] pl-[29px] pt-[1px] flex items-center whitespace-nowrap text-[#bdbdbd]">
              768 px x 768 px (72 ppi)
              <svg viewBox="0 0 5 9" className="ml-[35px] w-[5px] h-[9px]"><path d="M.5.500l4 4-4 4" fill="none" stroke="#a8a8a8" /></svg>
            </div>
            <div className="flex-1 h-full bg-[#4c4c4c]" />
          </div>
        </div>
        <IconDock />
        <div className="w-[227px] shrink-0 mr-[5px] flex flex-col">
          <div className="h-[11px] shrink-0 bg-[#424242] flex justify-end items-center pr-[6px]">
            <Arrows dir="right" />
          </div>
          <PropertiesPanel />
          <div className="h-[2px] shrink-0 bg-[#3e3e3e]" />
          <Tabs tabs={[['Adjustments', 'w-[71px]']]} h="h-[25px]" pb="pb-0" />
          <div className="h-[5px] shrink-0 bg-[#3e3e3e]" />
          <ColorPanel />
          <div className="h-[2px] shrink-0 bg-[#3e3e3e]" />
          <LayersPanel />
        </div>
      </div>

      <div className="h-[7px] shrink-0 pt-[2px]"><div className="h-[2px] bg-[#383838]" /></div>

      {/* edit menu */}
      <div className="absolute left-[58px] top-[17px] w-[236px] pt-[3px] pb-[1px] bg-[#f0f0f0] border border-[#a0a0a0] shadow-[2px_2px_3px_rgba(0,0,0,0.4)] text-[10.900px]">
        <MenuList items={editMenu} right="pr-[14px]" />
      </div>

      {/* preferences submenu */}
      <div className="absolute left-[288px] top-[756px] w-[157px] pt-[2px] pb-[1px] bg-[#f0f0f0] border border-[#a0a0a0] shadow-[2px_2px_3px_rgba(0,0,0,0.4)] text-[10.900px]">
        <MenuList items={prefsMenu} right="pr-[15px]" />
      </div>
    </div>
  );
}
